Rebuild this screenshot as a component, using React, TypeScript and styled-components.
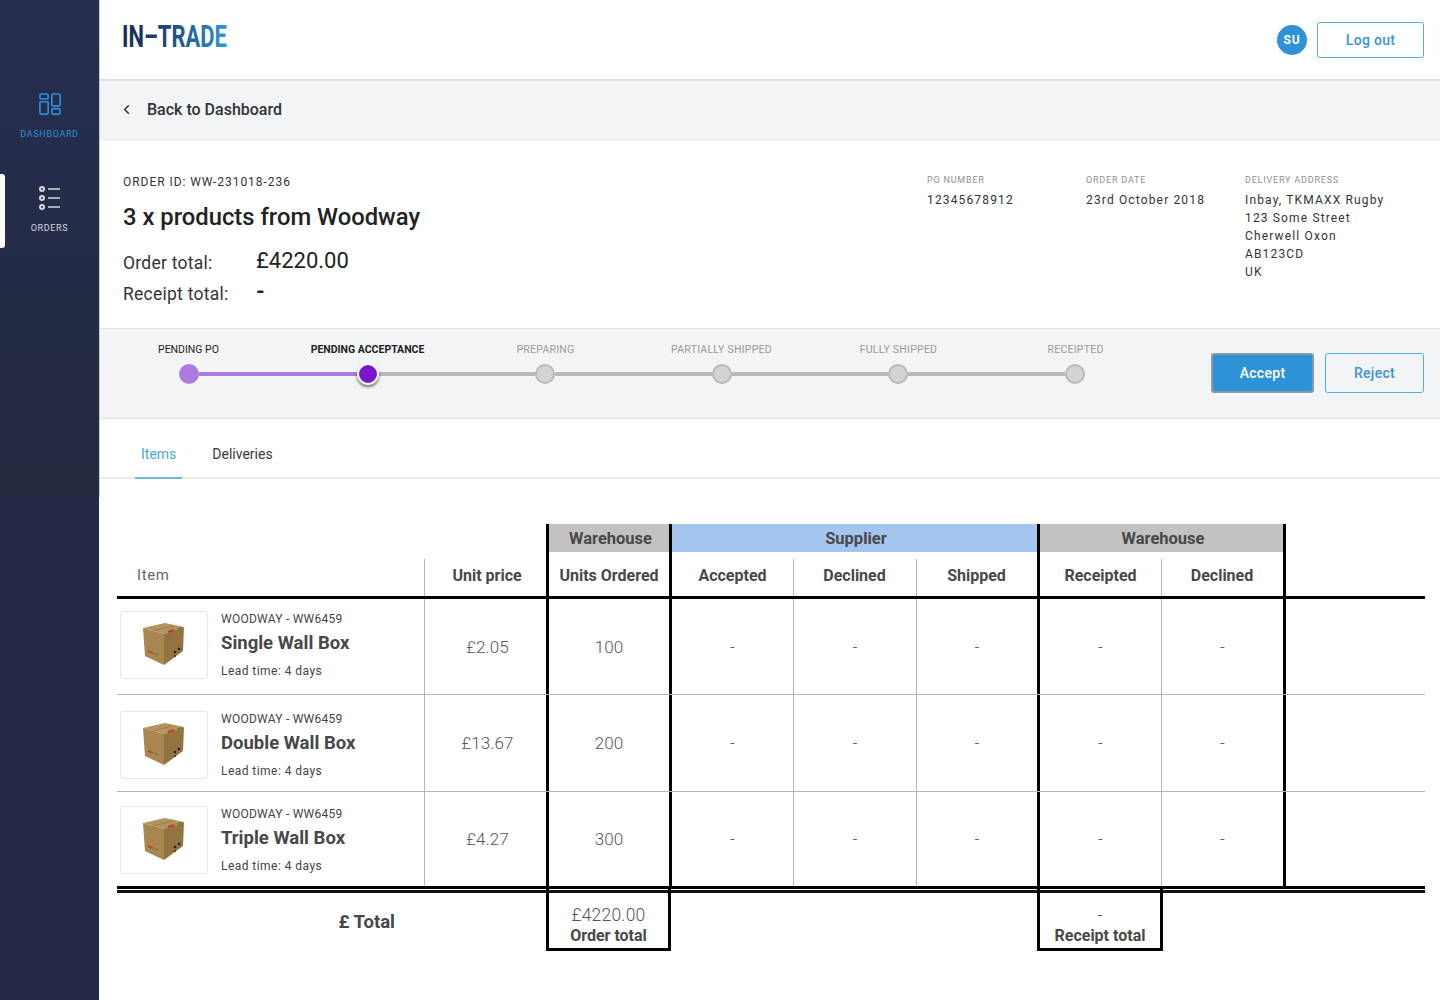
import React from 'react';
import styled, { createGlobalStyle } from 'styled-components';
import { ChevronLeft } from 'lucide-react';

const GlobalStyle = createGlobalStyle`
  html, body { margin: 0; padding: 0; background: #fff; }
  body { font-family: Roboto, "Liberation Sans", sans-serif; color: #333; }
  * { box-sizing: border-box; }
`;

const Page = styled.div`
  display: flex;
  width: 1440px;
  height: 1000px;
  overflow: hidden;
`;

const Sidebar = styled.aside`
  width: 99px;
  flex-shrink: 0;
  background: #252a47;
`;

const SidebarTop = styled.nav`
  position: relative;
  z-index: 1;
  height: 497px;
  padding-top: 80px;
  background: linear-gradient(#262e52, #232a3e);
  box-shadow: 1px 0 0 #c9cbd1;
`;

const NavItem = styled.a<{ $active?: boolean; $selected?: boolean }>`
  position: relative;
  display: flex;
  flex-direction: column;
  align-items: center;
  height: ${p => (p.$selected ? 74 : 94)}px;
  padding-top: ${p => (p.$selected ? 11 : 13)}px;
  color: ${p => (p.$active ? '#2f8fd6' : '#d4d7df')};

  ${p =>
    p.$selected &&
    `&::before {
      content: '';
      position: absolute;
      left: 0;
      top: 0;
      width: 5px;
      height: 74px;
      background: #fff;
      border-radius: 0 3px 3px 0;
    }`}
`;

const NavLabel = styled.span`
  margin-top: 12px;
  font-size: 9px;
  line-height: 11px;
  letter-spacing: 0.65px;
`;

const Main = styled.main`
  flex: 1;
  min-width: 0;
`;

const TopBar = styled.header`
  display: flex;
  align-items: center;
  justify-content: space-between;
  height: 81px;
  padding: 0 16px 0 23px;
  border-bottom: 2px solid #dfe0e3;
`;

const LogoMark = styled.svg`
  margin-bottom: 7px;
`;

const UserBox = styled.div`
  display: flex;
  align-items: center;
  gap: 10px;
`;

const Avatar = styled.div`
  display: flex;
  align-items: center;
  justify-content: center;
  width: 30px;
  height: 30px;
  border-radius: 50%;
  background: #2d93d6;
  color: #fff;
  font-size: 12px;
  font-weight: 700;
  letter-spacing: 0.8px;
`;

const OutlineButton = styled.button<{ $w: number; $h: number }>`
  width: ${p => p.$w}px;
  height: ${p => p.$h}px;
  border: 1.5px solid #56ace0;
  border-radius: 3px;
  background: transparent;
  color: #3a95d4;
  font: 500 14px Roboto, sans-serif;
  letter-spacing: 0.3px;
`;

const AcceptButton = styled.button`
  width: 103px;
  height: 40px;
  border: 2px solid #8b9aa6;
  border-radius: 3px;
  background: #2d93d6;
  color: #fff;
  font: 500 14px Roboto, sans-serif;
  letter-spacing: 0.3px;
`;

const BackBar = styled.div`
  display: flex;
  align-items: center;
  gap: 13px;
  height: 59px;
  padding: 0 0 1px 20px;
  background: #f3f4f6;
  border-bottom: 1px solid #e9eaec;
  box-shadow: 0 1px 3px rgba(0, 0, 0, 0.05);
  color: #2f3236;
  font-size: 16px;
  font-weight: 500;
`;

const OrderInfo = styled.section`
  display: flex;
  justify-content: space-between;
  height: 188px;
  padding: 35px 16px 0 24px;
`;

const OrderId = styled.div`
  font-size: 12px;
  line-height: 14px;
  letter-spacing: 0.95px;
  color: #333;
`;

const OrderTitle = styled.h1`
  margin: 13px 0 15px;
  font-size: 23.8px;
  line-height: 30px;
  font-weight: 500;
  color: #222;
`;

const TotalRow = styled.div`
  display: flex;
  align-items: center;
  height: 31px;
  font-size: 17.5px;
  letter-spacing: 0.25px;
  color: #333;
`;

const TotalLabel = styled.span`
  width: 133px;
`;

const TotalValue = styled.span<{ $strong?: boolean }>`
  margin-top: -4px;
  font-size: 22px;
  font-weight: ${p => (p.$strong ? 700 : 400)};
  letter-spacing: 0;
  color: #222;
`;

const MetaColumns = styled.div`
  display: flex;
`;

const MetaColumn = styled.div<{ $w: number }>`
  width: ${p => p.$w}px;
`;

const MetaLabel = styled.div`
  font-size: 9px;
  line-height: 11px;
  letter-spacing: 0.8px;
  color: #8c8f94;
`;

const MetaValue = styled.div`
  margin-top: 5px;
  font-size: 12px;
  line-height: 18px;
  letter-spacing: 1.15px;
  color: #333;
`;

const StepperBar = styled.section`
  display: flex;
  justify-content: space-between;
  height: 91px;
  padding: 0 16px 0 1px;
  background: #f3f4f6;
  border-top: 1px solid #dfe1e5;
  border-bottom: 1px solid #dfe1e5;
`;

const Steps = styled.div`
  padding-top: 14px;
`;

const StepLabels = styled.div`
  display: grid;
  grid-template-columns: 177px 181px 175px 177px 177px 177px;
`;

const StepLabel = styled.span<{ $state: string }>`
  text-align: center;
  font-size: 10.5px;
  line-height: 13px;
  font-weight: ${p => (p.$state === 'active' ? 700 : 400)};
  letter-spacing: ${p => (p.$state === 'todo' ? 0.25 : 0)}px;
  color: ${p => (p.$state === 'todo' ? '#9a9a9a' : '#1e1e1e')};
`;

const StepTrack = styled.div`
  display: flex;
  align-items: center;
  height: 22px;
  margin: 7px 0 0 79px;
`;

const Dot = styled.span<{ $state: string }>`
  flex-shrink: 0;
  border-radius: 50%;
  ${p =>
    p.$state === 'active'
      ? `width: 22px; height: 22px; margin: 0 -1px; position: relative;
         background: #7a17d1; border: 2px solid #fff; box-shadow: 0 2px 3px rgba(0,0,0,.55);`
      : p.$state === 'done'
      ? `width: 20px; height: 20px; background: #ab7be0;`
      : `width: 20px; height: 20px; background: #d3d3d3; border: 2px solid #b9b9b9;`}
`;

const Line = styled.span<{ $done?: boolean; $w: number }>`
  width: ${p => p.$w}px;
  height: 4px;
  background: ${p => (p.$done ? '#ab7be0' : '#b9b9b9')};
`;

const StepActions = styled.div`
  display: flex;
  gap: 11px;
  padding-top: 24px;
`;

const Tabs = styled.nav`
  display: flex;
  height: 60px;
  padding-left: 36px;
  border-bottom: 2px solid #ebebeb;
`;

const Tab = styled.a<{ $active?: boolean }>`
  display: flex;
  align-items: center;
  justify-content: center;
  height: 60px;
  padding: 12px 6px 0;
  margin-right: 24px;
  font-size: 14px;
  color: ${p => (p.$active ? '#4da6da' : '#3a3a3a')};
  border-bottom: 2px solid ${p => (p.$active ? '#6db8e0' : 'transparent')};
`;

const TableWrap = styled.div`
  width: 1308px;
  margin: 45px 0 0 18px;
`;

const columns = '307px 122px 123px 124px 123px 121px 124px 122px 142px';

const Band = styled.div`
  display: grid;
  grid-template-columns: ${columns};
  height: 28px;
`;

const BandCell = styled.div<{ $from: number; $to: number; $bg: string; $closed?: boolean }>`
  grid-column: ${p => p.$from} / ${p => p.$to};
  display: flex;
  align-items: center;
  justify-content: center;
  padding-left: 3px;
  background: ${p => p.$bg};
  border-left: 3px solid #000;
  border-right: ${p => (p.$closed ? '3px solid #000' : 'none')};
  margin-right: ${p => (p.$closed ? '-3px' : 0)};
  font-size: 16.5px;
  font-weight: 700;
  color: #484848;
`;

const Row = styled.div<{ $h: number; $rule?: string }>`
  display: grid;
  grid-template-columns: ${columns};
  height: ${p => p.$h}px;
  border-bottom: ${p => p.$rule || 'none'};
`;

const Cell = styled.div<{ $edge?: string; $nudge?: number }>`
  display: flex;
  align-items: center;
  justify-content: center;
  padding-left: ${p => p.$nudge || 0}px;
  border-left: ${p =>
    p.$edge === 'thick' ? '3px solid #000' : p.$edge === 'thin' ? '1px solid #b5b5b5' : 'none'};
  font-size: 17px;
  font-weight: 300;
  letter-spacing: 0.1px;
  color: #555;
`;

const HeadCell = styled(Cell)`
  padding-top: 2px;
  font-size: 16px;
  font-weight: 700;
  letter-spacing: 0;
  color: #484848;
  position: relative;
  ${p =>
    p.$edge === 'thin' &&
    `border-left: none;
    &::before {
      content: '';
      position: absolute;
      left: 0;
      top: 7px;
      bottom: 0;
      width: 1px;
      background: #b5b5b5;
    }`}
`;

const ItemHead = styled.div`
  display: flex;
  align-items: center;
  padding: 2px 0 0 20px;
  font-size: 15px;
  letter-spacing: 0.6px;
  color: #666;
`;

const ItemCell = styled.div<{ $top: number }>`
  display: flex;
  gap: 13px;
  padding: ${p => p.$top}px 0 0 3px;
`;

const Thumb = styled.div`
  width: 88px;
  height: 68px;
  flex-shrink: 0;
  border: 1px solid #e6e6e6;
  border-radius: 3px;
  background: #fff;
`;

const ItemText = styled.div`
  display: flex;
  flex-direction: column;
`;

const ItemCode = styled.div`
  margin-top: 1px;
  font-size: 12px;
  line-height: 14px;
  letter-spacing: 0.25px;
  color: #444;
`;

const ItemName = styled.div`
  margin-top: 5px;
  font-size: 18.5px;
  line-height: 24px;
  font-weight: 700;
  color: #484848;
`;

const ItemLead = styled.div`
  margin-top: 9px;
  font-size: 12px;
  line-height: 14px;
  letter-spacing: 0.45px;
  color: #444;
`;

const DoubleRule = styled.div`
  height: 7px;
  border-top: 3px solid #000;
  border-bottom: 3px solid #111;
  position: relative;
`;

const TotalsRow = styled.div`
  display: grid;
  grid-template-columns: ${columns};
`;

const TotalsCaption = styled.div`
  display: flex;
  justify-content: flex-end;
  padding: 18px 29px 0 0;
  font-size: 18.5px;
  line-height: 22px;
  font-weight: 700;
  color: #484848;
`;

const TotalBox = styled.div<{ $col: number }>`
  grid-column: ${p => p.$col};
  display: flex;
  flex-direction: column;
  align-items: center;
  width: calc(100% + 2px);
  height: 65px;
  margin-top: -7px;
  padding-top: 15px;
  border: 3px solid #000;
  position: relative;
`;

const BoxValue = styled.div`
  font-size: 17.5px;
  line-height: 22px;
  font-weight: 300;
  letter-spacing: 0.2px;
  color: #555;
`;

const BoxLabel = styled.div`
  font-size: 16px;
  line-height: 20px;
  font-weight: 700;
  color: #484848;
`;

// the wordmark is a tall condensed face, so the text is stretched upward instead of squeezed
const Logo = () => (
  <LogoMark width="125" height="44" viewBox="0 0 125 44" aria-label="IN-TRADE">
    <defs>
      <linearGradient id="logoFill" gradientUnits="userSpaceOnUse" x1="0" x2="105" y1="0" y2="0">
        <stop offset="0" stopColor="#1b2a50" />
        <stop offset="0.45" stopColor="#1b4a7c" />
        <stop offset="1" stopColor="#2f96d8" />
      </linearGradient>
    </defs>
    <text
      transform="scale(1 1.41)"
      x="0"
      y="23.4"
      textLength="105"
      fontFamily="Roboto, sans-serif"
      fontWeight="700"
      fontSize="22"
      fill="url(#logoFill)"
    >
      IN–TRADE
    </text>
  </LogoMark>
);

const DashboardIcon = () => (
  <svg width="22" height="24" viewBox="0 0 24 26" fill="none" stroke="currentColor" strokeWidth="1.8">
    <rect x="1" y="1" width="9" height="5.5" rx="1.5" />
    <rect x="1" y="9.5" width="9" height="13.5" rx="1.5" />
    <rect x="14" y="1" width="9" height="13" rx="1.5" />
    <rect x="14" y="17" width="9" height="6" rx="1.5" />
  </svg>
);

const OrdersIcon = () => (
  <svg width="24" height="26" viewBox="0 0 24 26" fill="none" stroke="currentColor" strokeWidth="2">
    <circle cx="4" cy="4" r="2" />
    <circle cx="4" cy="13" r="2" />
    <circle cx="4" cy="22" r="2" />
    <path d="M10 4h12M10 13h12M10 22h12" strokeWidth="1.6" />
  </svg>
);

const BoxPicture = () => (
  <svg width="86" height="66" viewBox="1 1 86 66">
    <path d="M23 17 45 12 64 16 44 23Z" fill="#b3945f" />
    <path d="M23 17 44 23 44 54 25 45Z" fill="#a98650" />
    <path d="M44 23 64 16 63 40 44 54Z" fill="#93733f" />
    <path d="M33 20 54 14.5" stroke="#9d7e4c" strokeWidth="1" />
    <path d="M48 21 54 19" stroke="#c23a2c" strokeWidth="2" />
    <path d="M57 18 62 16.5" stroke="#4c7a3a" strokeWidth="1" />
    <path d="M28 40 33 42" stroke="#c23a2c" strokeWidth="1.4" />
    <path d="M34 42 38 44" stroke="#4c7a3a" strokeWidth="1" />
    <circle cx="55" cy="41" r="1.3" fill="#222" />
    <circle cx="59" cy="38" r="1.3" fill="#222" />
    <circle cx="55" cy="45" r="1" fill="#333" />
  </svg>
);

const steps = [
  { label: 'PENDING PO', state: 'done', next: 159 },
  { label: 'PENDING ACCEPTANCE', state: 'active', next: 157 },
  { label: 'PREPARING', state: 'todo', next: 157 },
  { label: 'PARTIALLY SHIPPED', state: 'todo', next: 156 },
  { label: 'FULLY SHIPPED', state: 'todo', next: 157 },
  { label: 'RECEIPTED', state: 'todo', next: 0 },
];

const items = [
  { name: 'Single Wall Box', price: '£2.05', units: '100', h: 96, top: 12 },
  { name: 'Double Wall Box', price: '£13.67', units: '200', h: 97, top: 16 },
  { name: 'Triple Wall Box', price: '£4.27', units: '300', h: 94, top: 14 },
];

const edges = ['thick', 'thin', 'thin', 'thick', 'thin'];

const App: React.FunctionComponent = () => {
  return (
    <Page>
      <GlobalStyle />
      <Sidebar>
        <SidebarTop>
          <NavItem $active>
            <DashboardIcon />
            <NavLabel>DASHBOARD</NavLabel>
          </NavItem>
          <NavItem $selected>
            <OrdersIcon />
            <NavLabel>ORDERS</NavLabel>
          </NavItem>
        </SidebarTop>
      </Sidebar>
      <Main>
        <TopBar>
          <Logo />
          <UserBox>
            <Avatar>SU</Avatar>
            <OutlineButton $w={107} $h={36}>Log out</OutlineButton>
          </UserBox>
        </TopBar>
        <BackBar>
          <ChevronLeft size={15} strokeWidth={2.5} />
          Back to Dashboard
        </BackBar>
        <OrderInfo>
          <div>
            <OrderId>ORDER ID: WW-231018-236</OrderId>
            <OrderTitle>3 x products from Woodway</OrderTitle>
            <TotalRow>
              <TotalLabel>Order total:</TotalLabel>
              <TotalValue>£4220.00</TotalValue>
            </TotalRow>
            <TotalRow>
              <TotalLabel>Receipt total:</TotalLabel>
              <TotalValue $strong>-</TotalValue>
            </TotalRow>
          </div>
          <MetaColumns>
            <MetaColumn $w={159}>
              <MetaLabel>PO NUMBER</MetaLabel>
              <MetaValue>12345678912</MetaValue>
            </MetaColumn>
            <MetaColumn $w={159}>
              <MetaLabel>ORDER DATE</MetaLabel>
              <MetaValue>23rd October 2018</MetaValue>
            </MetaColumn>
            <MetaColumn $w={179}>
              <MetaLabel>DELIVERY ADDRESS</MetaLabel>
              <MetaValue>
                Inbay, TKMAXX Rugby<br />
                123 Some Street<br />
                Cherwell Oxon<br />
                AB123CD<br />
                UK
              </MetaValue>
            </MetaColumn>
          </MetaColumns>
        </OrderInfo>
        <StepperBar>
          <Steps>
            <StepLabels>
              {steps.map(s => (
                <StepLabel key={s.label} $state={s.state}>{s.label}</StepLabel>
              ))}
            </StepLabels>
            <StepTrack>
              {steps.map((s, i) => (
                <React.Fragment key={s.label}>
                  <Dot $state={s.state} />
                  {s.next > 0 && <Line $done={i === 0} $w={s.next} />}
                </React.Fragment>
              ))}
            </StepTrack>
          </Steps>
          <StepActions>
            <AcceptButton>Accept</AcceptButton>
            <OutlineButton $w={99} $h={40}>Reject</OutlineButton>
          </StepActions>
        </StepperBar>
        <Tabs>
          <Tab $active>Items</Tab>
          <Tab>Deliveries</Tab>
        </Tabs>
        <TableWrap>
          <Band>
            <BandCell $from={3} $to={4} $bg="#c2c2c2">Warehouse</BandCell>
            <BandCell $from={4} $to={7} $bg="#a3c5ee">Supplier</BandCell>
            <BandCell $from={7} $to={9} $bg="#c2c2c2" $closed>Warehouse</BandCell>
          </Band>
          <Row $h={47} $rule="3px solid #000">
            <ItemHead>Item</ItemHead>
            <HeadCell $edge="thin" $nudge={4}>Unit price</HeadCell>
            <HeadCell $edge="thick">Units Ordered</HeadCell>
            <HeadCell $edge="thick">Accepted</HeadCell>
            <HeadCell $edge="thin">Declined</HeadCell>
            <HeadCell $edge="thin">Shipped</HeadCell>
            <HeadCell $edge="thick">Receipted</HeadCell>
            <HeadCell $edge="thin">Declined</HeadCell>
            <HeadCell $edge="thick" />
          </Row>
          {items.map((item, i) => (
            <Row key={item.name} $h={item.h} $rule={i < items.length - 1 ? '1px solid #b5b5b5' : undefined}>
              <ItemCell $top={item.top}>
                <Thumb><BoxPicture /></Thumb>
                <ItemText>
                  <ItemCode>WOODWAY - WW6459</ItemCode>
                  <ItemName>{item.name}</ItemName>
                  <ItemLead>Lead time: 4 days</ItemLead>
                </ItemText>
              </ItemCell>
              <Cell $edge="thin" $nudge={4}>{item.price}</Cell>
              <Cell $edge="thick">{item.units}</Cell>
              {edges.map((edge, j) => (
                <Cell key={j} $edge={edge}>-</Cell>
              ))}
              <Cell $edge="thick" />
            </Row>
          ))}
          <DoubleRule />
          <TotalsRow>
            <TotalsCaption>£ Total</TotalsCaption>
            <TotalBox $col={3}>
              <BoxValue>£4220.00</BoxValue>
              <BoxLabel>Order total</BoxLabel>
            </TotalBox>
            <TotalBox $col={7}>
              <BoxValue>-</BoxValue>
              <BoxLabel>Receipt total</BoxLabel>
            </TotalBox>
          </TotalsRow>
        </TableWrap>
      </Main>
    </Page>
  );
};

export default App;
